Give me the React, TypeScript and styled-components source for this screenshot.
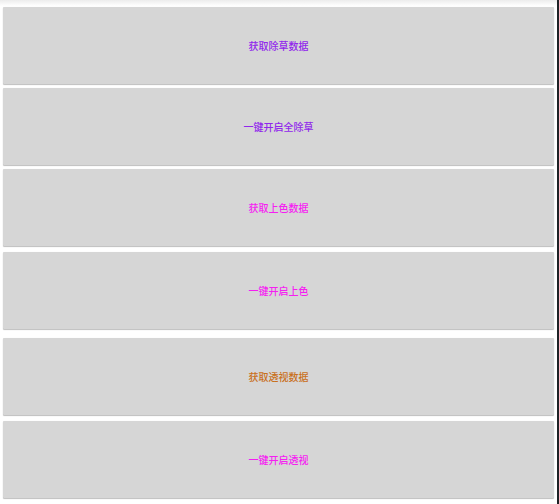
import styled, { createGlobalStyle } from "styled-components";

const GlobalStyle = createGlobalStyle`
  html, body {
    margin: 0;
    padding: 0;
    background: #fff;
  }
  body {
    font-family: "Noto Sans CJK SC", "Noto Sans", sans-serif;
  }
`;

const Screen = styled.div`
  display: flex;
  width: 559px;
  height: 504px;
  overflow: hidden;
  background: #fff;
`;

const Main = styled.div`
  flex: 1;
  display: flex;
  flex-direction: column;
`;

const EdgeStrip = styled.div`
  width: 2px;
  background: #1e2226;
`;

const TopShade = styled.div`
  height: 6px;
  background: linear-gradient(#ececec, #fff);
`;

const ButtonList = styled.div`
  display: flex;
  flex-direction: column;
  gap: 4px;
  padding: 1px 3px 0;
`;

const ActionButton = styled.button<{ $color: string; $extra?: number }>`
  height: 77px;
  margin-top: ${(p) => p.$extra ?? 0}px;
  border: none;
  border-radius: 1px;
  background: #d6d6d6;
  box-shadow: 0 1px 1px rgba(0, 0, 0, 0.25), 0 0 1px rgba(0, 0, 0, 0.08);
  color: ${(p) => p.$color};
  font-family: "Noto Sans CJK SC", "Noto Sans", sans-serif;
  font-size: 10px;
  font-weight: 500;
  line-height: 1;
  padding: 0;
  cursor: pointer;
`;

const actions = [
  { label: "获取除草数据", color: "#9127ec" },
  { label: "一键开启全除草", color: "#9127ec" },
  { label: "获取上色数据", color: "#f51ef2" },
  { label: "一键开启上色", color: "#f51ef2", extra: 2 },
  { label: "获取透视数据", color: "#c9701c", extra: 5 },
  { label: "一键开启透视", color: "#f51ef2", extra: 2 },
];

export default function App() {
  return (
    <Screen>
      <GlobalStyle />
      <Main>
        <TopShade />
        <ButtonList>
          {actions.map((a) => (
            <ActionButton key={a.label} $color={a.color} $extra={a.extra}>
              {a.label}
            </ActionButton>
          ))}
        </ButtonList>
      </Main>
      <EdgeStrip />
    </Screen>
  );
}
